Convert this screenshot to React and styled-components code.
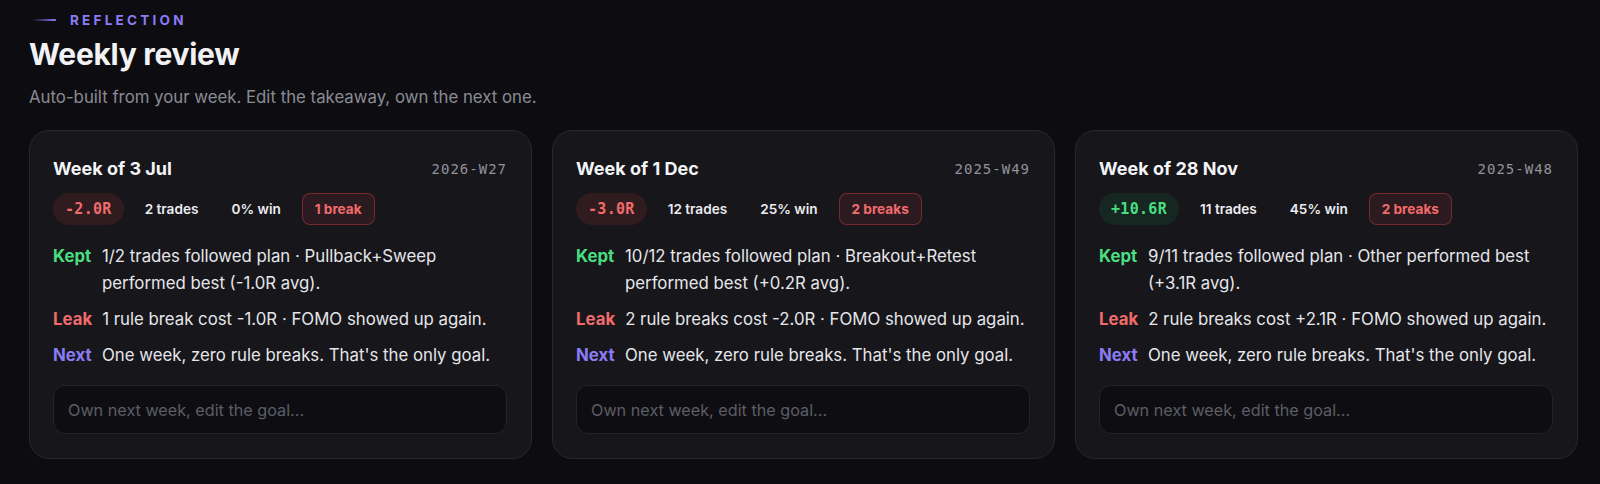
import React from "react";
import styled, { createGlobalStyle } from "styled-components";

const GlobalStyle = createGlobalStyle`
  * { box-sizing: border-box; }
  html, body {
    margin: 0;
    padding: 0;
    background: #0d0d11;
  }
  body {
    font-family: Inter, "Noto Sans", "Liberation Sans", sans-serif;
    color: #ececf0;
    -webkit-font-smoothing: antialiased;
  }
`;

const Section = styled.section`
  padding: 12px 22px 24px 29px;
`;

const Eyebrow = styled.div`
  display: flex;
  align-items: center;
  gap: 14px;
  height: 16px;
  padding-left: 3px;
  font-size: 13.5px;
  font-weight: 700;
  letter-spacing: 0.24em;
  color: #8b7cf6;
  text-transform: uppercase;
`;

const EyebrowLine = styled.span`
  width: 24px;
  height: 2px;
  border-radius: 1px;
  background: linear-gradient(90deg, rgba(139, 124, 246, 0), #8b7cf6);
`;

const Title = styled.h1`
  margin: 8px 0 0;
  font-size: 30px;
  line-height: 36px;
  font-weight: 700;
  letter-spacing: -0.01em;
  color: #f2f2f5;
`;

const Subtitle = styled.p`
  margin: 13px 0 0;
  font-size: 16.8px;
  line-height: 24px;
  color: #8b8b94;
`;

const Grid = styled.div`
  margin-top: 21px;
  display: grid;
  grid-template-columns: repeat(3, 1fr);
  gap: 20px;
`;

const Card = styled.article`
  background: #16161b;
  border: 1px solid #27272e;
  border-radius: 20px;
  padding: 24px 24px 24px 23px;
  display: flex;
  flex-direction: column;
`;

const CardHead = styled.header`
  display: flex;
  align-items: center;
  justify-content: space-between;
  height: 28px;
`;

const CardTitle = styled.h2`
  margin: 0;
  font-size: 18px;
  font-weight: 700;
  line-height: 28px;
  color: #f4f4f6;
`;

const WeekCode = styled.span`
  font-family: "DejaVu Sans Mono", "Liberation Mono", monospace;
  font-size: 14px;
  letter-spacing: 1px;
  color: #92929a;
`;

const Stats = styled.div`
  margin-top: 10px;
  display: flex;
  align-items: center;
  gap: 9px;
`;

const Pill = styled.span`
  display: inline-flex;
  align-items: center;
  height: 32px;
  padding: 0 12px;
  border-radius: ${(p) => (p.$variant === "break" ? "8px" : "16px")};
  font-size: 13.6px;
  font-weight: 600;
  color: #ececf0;
  border: ${(p) => (p.$variant === "break" ? "1px solid rgba(239, 68, 68, 0.38)" : "none")};
  background: ${(p) =>
    p.$variant === "break" ? "rgba(239, 68, 68, 0.1)" : "transparent"};
  ${(p) => p.$variant === "break" && "color: #f26b6b; font-weight: 700;"}
`;

const RPill = styled(Pill)`
  font-family: "DejaVu Sans Mono", "Liberation Mono", monospace;
  font-size: 15px;
  font-weight: 700;
  letter-spacing: 0.3px;
  color: ${(p) => (p.$up ? "#4ade80" : "#f26b6b")};
  background: ${(p) => (p.$up ? "rgba(34, 197, 94, 0.1)" : "rgba(239, 68, 68, 0.12)")};
`;

const Notes = styled.div`
  margin-top: 18px;
  display: flex;
  flex-direction: column;
  gap: 9px;
`;

const NoteRow = styled.div`
  display: flex;
  gap: 10px;
  font-size: 16.8px;
  line-height: 27px;
`;

const NoteLabel = styled.span`
  flex: 0 0 39px;
  font-weight: 700;
  color: ${(p) => p.$color};
`;

const NoteText = styled.span`
  color: #e6e6ea;
`;

const GoalInput = styled.input`
  margin-top: 16px;
  height: 49px;
  width: 100%;
  padding: 0 14px;
  border-radius: 12px;
  border: 1px solid #232329;
  background: #0e0e12;
  font-family: inherit;
  font-size: 16.2px;
  color: #e6e6ea;
  outline: none;
  &::placeholder {
    color: #5d5d66;
  }
`;

const weeks = [
  {
    title: "Week of 3 Jul",
    code: "2026-W27",
    r: "-2.0R",
    up: false,
    trades: "2 trades",
    win: "0% win",
    breaks: "1 break",
    kept: "1/2 trades followed plan · Pullback+Sweep performed best (-1.0R avg).",
    leak: "1 rule break cost -1.0R · FOMO showed up again.",
  },
  {
    title: "Week of 1 Dec",
    code: "2025-W49",
    r: "-3.0R",
    up: false,
    trades: "12 trades",
    win: "25% win",
    breaks: "2 breaks",
    kept: "10/12 trades followed plan · Breakout+Retest performed best (+0.2R avg).",
    leak: "2 rule breaks cost -2.0R · FOMO showed up again.",
  },
  {
    title: "Week of 28 Nov",
    code: "2025-W48",
    r: "+10.6R",
    up: true,
    trades: "11 trades",
    win: "45% win",
    breaks: "2 breaks",
    kept: "9/11 trades followed plan · Other performed best (+3.1R avg).",
    leak: "2 rule breaks cost +2.1R · FOMO showed up again.",
  },
];

const WeekCard = ({ week }) => (
  <Card>
    <CardHead>
      <CardTitle>{week.title}</CardTitle>
      <WeekCode>{week.code}</WeekCode>
    </CardHead>
    <Stats>
      <RPill $up={week.up}>{week.r}</RPill>
      <Pill>{week.trades}</Pill>
      <Pill>{week.win}</Pill>
      <Pill $variant="break">{week.breaks}</Pill>
    </Stats>
    <Notes>
      <NoteRow>
        <NoteLabel $color="#4ade80">Kept</NoteLabel>
        <NoteText>{week.kept}</NoteText>
      </NoteRow>
      <NoteRow>
        <NoteLabel $color="#f26b6b">Leak</NoteLabel>
        <NoteText>{week.leak}</NoteText>
      </NoteRow>
      <NoteRow>
        <NoteLabel $color="#8b7cf6">Next</NoteLabel>
        <NoteText>One week, zero rule breaks. That's the only goal.</NoteText>
      </NoteRow>
    </Notes>
    <GoalInput type="text" placeholder="Own next week, edit the goal..." />
  </Card>
);

const App = () => (
  <>
    <GlobalStyle />
    <Section>
      <Eyebrow>
        <EyebrowLine />
        Reflection
      </Eyebrow>
      <Title>Weekly review</Title>
      <Subtitle>Auto-built from your week. Edit the takeaway, own the next one.</Subtitle>
      <Grid>
        {weeks.map((w) => (
          <WeekCard key={w.code} week={w} />
        ))}
      </Grid>
    </Section>
  </>
);

export default App;
